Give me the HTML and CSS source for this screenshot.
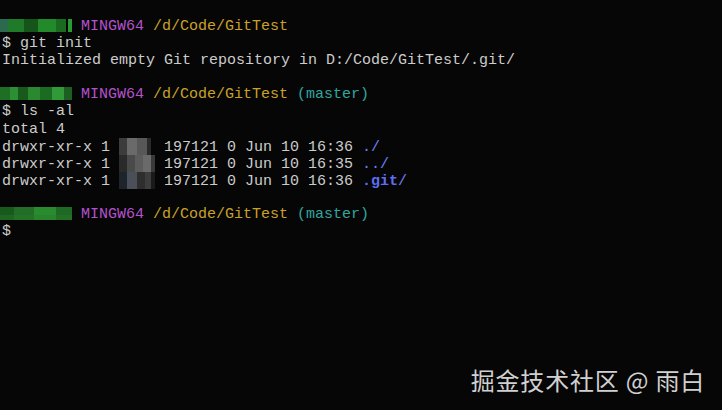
FILE: index.html
```html
<!DOCTYPE html>
<html>
<head>
<meta charset="utf-8">
<link rel="stylesheet" href="styles.css">
</head>
<body>
<div class="term">
<div class="line"><span class="user u1"></span> <span class="mg">MINGW64</span> <span class="yl">/d/Code/GitTest</span></div>
<div class="line">$ git init</div>
<div class="line">Initialized empty Git repository in D:/Code/GitTest/.git/</div>
<div class="line"> </div>
<div class="line"><span class="user u2"></span> <span class="mg">MINGW64</span> <span class="yl">/d/Code/GitTest</span> <span class="cy">(master)</span></div>
<div class="line">$ ls -al</div>
<div class="line">total 4</div>
<div class="line">drwxr-xr-x 1 <span class="blur b1"></span> 197121 0 Jun 10 16:36 <span class="bl">./</span></div>
<div class="line">drwxr-xr-x 1 <span class="blur b2"></span> 197121 0 Jun 10 16:35 <span class="bl">../</span></div>
<div class="line">drwxr-xr-x 1 <span class="blur b3"></span> 197121 0 Jun 10 16:36 <span class="bl bold">.git</span><span class="bl">/</span></div>
<div class="line"> </div>
<div class="line"><span class="user u3"></span> <span class="mg">MINGW64</span> <span class="yl">/d/Code/GitTest</span> <span class="cy">(master)</span></div>
<div class="line">$</div>
</div>
<div class="mark">掘金技术社区 @ 雨白</div>
</body>
</html>
```
FILE: styles.css
```css
html, body {
  margin: 0;
  padding: 0;
  background: #060606;
  width: 722px;
  height: 410px;
  overflow: hidden;
  position: relative;
}
.term {
  padding: 18px 0 0 2px;
  font-family: "Liberation Mono", "DejaVu Sans Mono", monospace;
  font-size: 15px;
  color: #cccccc;
}
.line {
  height: 17.1px;
  line-height: 17.1px;
  white-space: pre;
}
.mg { color: #b452cd; }
.yl { color: #c9a227; }
.cy { color: #2fa7a0; }
.bl { color: #6f7df5; }
.bold { font-weight: bold; color: #5d6ef2; }
.user {
  display: inline-block;
  width: 72px;
  height: 13px;
  vertical-align: -2px;
  margin-left: -2px;
}
.u1 {
  background:
    linear-gradient(90deg, #2b6a4e 0 8px, #1f7a2a 8px 24px, #16551a 24px 38px, #238a2b 38px 56px, #1a6b20 56px 66px, #060606 66px 68px, #2a9a32 68px 72px);
}
.u2 {
  background:
    linear-gradient(90deg, #1f6e26 0 10px, #2c8f34 10px 18px, #175a1c 18px 28px, #2a8830 28px 40px, #1b6c22 40px 52px, #2f9a37 52px 64px, #1d5e22 64px 72px);
}
.u3 {
  background:
    linear-gradient(180deg, rgba(0,0,0,0) 0 8px, rgba(40,120,40,0.4) 8px 13px),
    linear-gradient(90deg, #175a1c 0 14px, #226e26 14px 34px, #2a8a30 34px 56px, #1e6a24 56px 72px);
}
.blur {
  display: inline-block;
  width: 36px;
  height: 17px;
  vertical-align: -4px;
}
.b1 {
  background: linear-gradient(90deg, #3c3c3c 0 8px, #6a6a6a 8px 18px, #585858 18px 28px, #2a2a2a 28px 32px, #060606 32px 36px);
}
.b2 {
  background: linear-gradient(90deg, #2a2a2a 0 8px, #4a4a4a 8px 16px, #5c5c5c 16px 24px, #6a6a6a 24px 32px, #3a3a3a 32px 36px);
}
.b3 {
  background: linear-gradient(90deg, #1e242c 0 8px, #4a4f58 8px 18px, #2e2e2e 18px 26px, #3d3d3d 26px 32px, #1a1a1a 32px 36px);
}
.mark {
  position: absolute;
  right: 17px;
  top: 365px;
  font-family: "Noto Sans CJK SC", "Noto Sans", sans-serif;
  font-size: 24px;
  letter-spacing: 0.8px;
  color: #d0d0d0;
  line-height: 30px;
}
```
